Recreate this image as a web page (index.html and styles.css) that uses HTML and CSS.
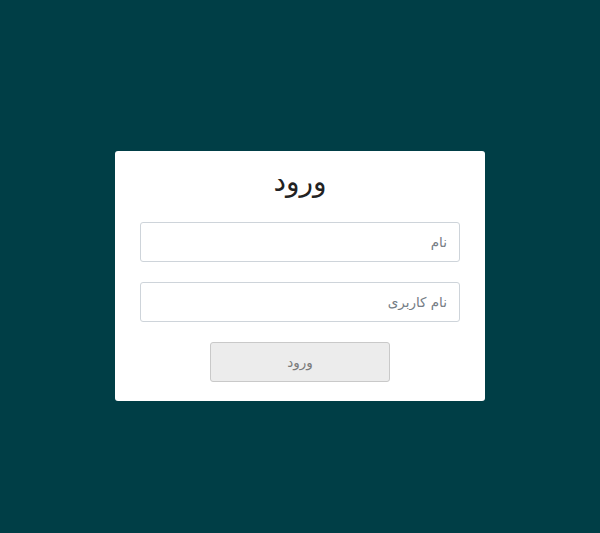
FILE: index.html
```html
<!DOCTYPE html>
<html lang="fa" dir="rtl">
<head>
<meta charset="utf-8">
<title>ورود</title>
<link rel="stylesheet" href="styles.css">
</head>
<body>
<main class="page">
  <form class="card">
    <h1 class="title">ورود</h1>
    <input class="field" type="text" placeholder="نام">
    <input class="field" type="text" placeholder="نام کاربری">
    <button class="btn" type="button" disabled>ورود</button>
  </form>
</main>
</body>
</html>
```
FILE: styles.css
```css
html, body {
  margin: 0;
  height: 100%;
}
body {
  background: #003e46;
  font-family: "DejaVu Sans", sans-serif;
}
.page {
  height: 100%;
  box-sizing: border-box;
  padding-top: 19px;
  display: flex;
  align-items: center;
  justify-content: center;
}
.card {
  width: 370px;
  box-sizing: border-box;
  background: #fff;
  border-radius: 3px;
  padding: 11px 25px 19px;
  display: flex;
  flex-direction: column;
  align-items: center;
  gap: 20px;
}
.title {
  margin: 0;
  font-size: 28px;
  font-weight: 400;
  line-height: 40px;
  color: #222;
}
.field {
  width: 100%;
  height: 40px;
  box-sizing: border-box;
  border: 1px solid #ced4da;
  border-radius: 3px;
  padding: 0 12px;
  font-family: inherit;
  font-size: 13.5px;
  color: #495057;
  background: #fff;
  direction: rtl;
}
.field::placeholder {
  color: #757d85;
}
.btn {
  width: 180px;
  height: 40px;
  box-sizing: border-box;
  border: 1px solid #c9c9c9;
  border-radius: 3px;
  background: #ececec;
  color: #7a7a7a;
  font-family: inherit;
  font-size: 13.5px;
}
```
